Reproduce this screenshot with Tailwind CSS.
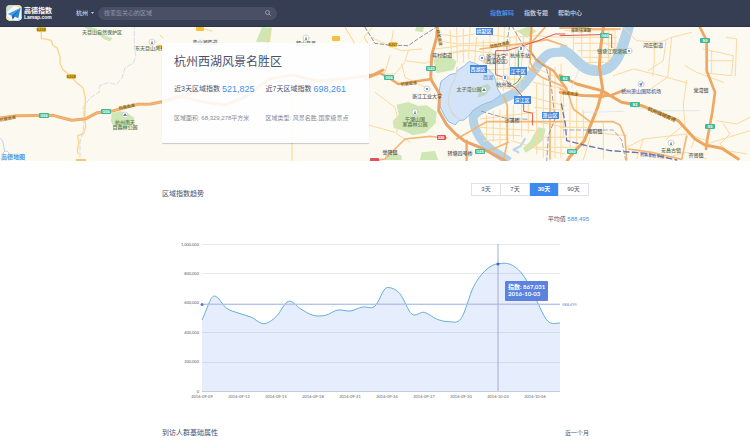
<!DOCTYPE html>
<html lang="zh-CN">
<head>
<meta charset="utf-8">
<meta name="viewport" content="width=device-width, initial-scale=1">
<title>高德指数</title>
<script src="https://cdn.jsdelivr.net/npm/@tailwindcss/browser@4"></script>
</head>
<body class="min-h-screen bg-white font-['Liberation_Sans','Noto_Sans_CJK_SC',sans-serif] text-[6px] leading-[8px] text-[#4a5068]">

<header class="flex h-[27px] items-center border-b border-[#2b3348] bg-[#363e54] pl-[6px] pr-[168px] text-[#d3d6de]">
  <a href="#" class="flex items-center gap-[2px] text-white" aria-label="高德指数">
    <svg class="h-[16px] w-[16px]" viewBox="0 0 48 48">
      <defs><clipPath id="lc"><rect x="1" y="1" width="46" height="46" rx="10"/></clipPath></defs>
      <g clip-path="url(#lc)">
        <rect width="48" height="48" fill="#f6f8f6"/>
        <path d="M0 0h26L0 24z" fill="#c9e3cf"/><path d="M22 0h26v12z" fill="#f5e3a0"/><path d="M0 30l20 18H0z" fill="#f3e7b4"/><path d="M26 48l22-12v12z" fill="#cfe6f7"/>
        <path d="M44 8L5 27l12 5z" fill="#3aa0ee"/><path d="M44 8L17 32l3 12 6-9z" fill="#1565b8"/><path d="M44 8L23 34l14 6z" fill="#2689e0"/>
      </g>
    </svg>
    <span class="flex flex-col font-bold">
      <span class="text-[7px] leading-[8px]">高德指数</span>
      <span class="text-[5px] leading-[5px]">Lamap.com</span>
    </span>
  </a>
  <button type="button" class="ml-[24px] flex items-center gap-[3px] font-medium">杭州
    <svg class="h-[2px] w-[3px]" viewBox="0 0 6 4"><path d="M0 0h6L3 4z" fill="#c5c9d4"/></svg>
  </button>
  <form class="ml-[4px] flex h-[13px] w-[179px] items-center rounded-full bg-[#4a4f66] px-[6px]">
    <label for="q" class="sr-only">搜索</label>
    <input id="q" type="text" placeholder="搜索您关心的区域" class="h-full min-w-0 flex-1 bg-transparent text-[6px] leading-[13px] outline-none placeholder:text-[#9498a8]">
    <button type="submit" aria-label="搜索"><svg class="h-[6px] w-[6px]" viewBox="0 0 12 12" fill="none" stroke="#a4a8b6" stroke-width="1.6"><circle cx="5" cy="5" r="4"/><path d="M8 8l3.5 3.5"/></svg></button>
  </form>
  <nav class="ml-auto flex gap-[10px] font-medium">
    <a href="#" class="text-[#4a9bf0]">指数解码</a>
    <a href="#">指数专题</a>
    <a href="#">帮助中心</a>
  </nav>
</header>

<section class="relative overflow-hidden bg-[#fcf9f0] pb-[18px] pt-[16px]">
  <svg class="absolute inset-0 h-full w-full" viewBox="0 27 750 134" preserveAspectRatio="xMidYMid slice" fill="none" stroke-linecap="round" stroke-linejoin="round" role="img" aria-label="杭州地图">
    <!-- west -->
    <g transform="translate(0 24) scale(.3333)">
      <path d="M245 0l45 14 20 20 28 8-8 10-18-6-16-14-40-20zM335 268l26-7 22 8 20 12-4 22-26 14-32-8-8-18z" fill="#cfe7b4"/>
      <path d="M403 0v75l5 22-8 20-25 15-8 28-18 22-24-6-25 8-2 20-28 18-20 28v70l-10 35 0 45" stroke="#d3d6e4" stroke-width="2.5" stroke-dasharray="14 7"/>
      <path d="M124 5v38l30 6 4 14 14 10 8 25v20l8 18 24 20 20 22 17 13 7 30-2 60 3 28-6 20-18 6 4 22-5 20 2 12" stroke="#f8d58a" stroke-width="4"/>
      <path d="M0 282l50-7 110-1 28 8 28 7 42-5 34-18 50-6 70-19 40-1 60-12 90-30" stroke="#eda55f" stroke-width="9"/>
      <path d="M0 282l50-7 110-1 28 8 28 7 42-5 34-18 50-6 70-19 40-1 60-12 90-30" stroke="#f3b678" stroke-width="4"/>
      <path d="M0 343l8 8 8 40" stroke="#b9d4ea" stroke-width="3"/>
      <path d="M230 408h26" stroke="#f0b740" stroke-width="5"/>
    </g>
    <!-- middle -->
    <path d="M262 27l10 1-2 14h-14z" fill="#cfe7b4"/>
    <path d="M163 101l16-5 24 6 22 3 20-8 24-18 24-4 24 6 26-2 30-4 10-5" stroke="#eda55f" stroke-width="3"/>
    <path d="M270 27l-3 20 10 30 15 20v65M196 27l16 4M160 35l3 3M345 27l10 17 12 9M372 28l-8 9 5 8" stroke="#f8d58a" stroke-width="1"/>
    <!-- lake and city -->
    <g transform="translate(365 24) scale(.3333)">
      <path d="M95 242l35-8 30 12 25-2 30 20-3 34-30 28-38 8-28-14-30-8-3-20 18-20zM205 105l45-12 25 20-10 25-50 10zM60 395l25-12 25 12v13H60zM170 385l40-4 10 27h-55zM520 310l22 4-8 35-32 25-20 12-8-14 20-18zM455 20l35-12 25 14-30 20zM155 6l22 3-3 16-24-4z" fill="#cfe7b4"/>
      <path d="M480 345l-14 22-20 10 14 8" stroke="#bcd8ea" stroke-width="7"/>
      <path d="M330 262C315 290 335 335 365 365S415 395 430 412" stroke="#b5d3e8" stroke-width="27" stroke-linecap="butt"/>
      <path d="M330 272C365 235 415 232 450 205S500 150 525 115 565 85 600 84" stroke="#b5d3e8" stroke-width="28" stroke-linecap="butt"/>
      <g stroke="#fbd9a0" stroke-width="3">
        <path d="M20 40l60 30 30 10 60-5M130 80l-10 30 60 8 70-30 80-10M75 95l-15 50-45 15M85 20l-8 50M30 205l60 45 10 40-5 40 40 25M40 150l50 0 30-35M110 120l10 40 60 30M0 300l90 25M220 30l55 8 70-10 90 12 70-5 95 5M215 50l65 10 100-5 120 15M210 75l80-10 100 0 60 5M240 90l60-12 120 14M255 20l5 80M275 12l2 100M295 15l0 100M315 10l-4 92M335 40l-6 75M355 48l0 70M375 25l0 100M400 10l-4 200M418 10l-3 190M435 40l-3 150M455 20l-8 180M478 20l-14 170M500 30l-8 100M330 140l150-8M380 165l100 0M390 190l80 5"/>
        <path d="M345 285l165-20M340 310l170 10M345 330l120 5M355 350l75-4M365 275v75M385 262v90M405 258v104M425 260v90M445 245v100M470 230v110M490 240v85M440 350l80 25 80 15M510 130l85 40M505 175l95 20M500 220l100 25M510 250l90 10M500 290l100 20M515 180v210M535 160v240M570 130v270M588 120v280M520 340h80M510 370h90"/>
      </g>
      <path d="M15 412l45-7 60-60 75-8 50 5M275 345l90-52h235M415 215l12 30v110l-10 45M345 75l155-20 45-8 60 20M490 130l40 30 70 30M555 135v270M345 385l40-10 45-20M540 10l-40 45-5 60 15 25" stroke="#f4b675" stroke-width="5"/>
      <path d="M222 205L228 172 255 152 272 148 282 136 300 124 312 112 330 118 350 128 372 138 385 150 392 170 398 195 408 212 385 230 352 242 325 258 315 272 297 288 282 290 270 303 250 292 240 278 226 250z" fill="#d3e3f8" stroke="#94bde9" stroke-width="3"/>
      <path d="M348 187l20-8 10 12-16 22-24 8 4-18z" fill="#bcd8c4"/>
      <path d="M276 130c2 40-26 50-26 100 2 32 16 48 38 58" stroke="#d5d9d3" stroke-width="4"/>
      <path d="M218 0L215 40 200 95 197 165 224 210 221 260 245 302 272 330 300 352 350 372 420 410" stroke="#e8a56a" stroke-width="9"/>
      <path d="M0 165l45-18 35 20 20 13 100-15M305 350v60M500 0l-5 80 20 30 50 30 40 55" stroke="#efa863" stroke-width="7"/>
      <path d="M0 10l30 48 40 5 60 2 28-20 60-38" stroke="#777c94" stroke-width="2.5" stroke-dasharray="11 7"/>
      <path d="M434 5l-8 50 0 40M440 5l35 60 70 70 15 60 10 90-20 50-5 80M350 262l70 20 70 4" stroke="#868aa2" stroke-width="2.5" stroke-dasharray="13 8"/>
      <path d="M600 30h-30l-50 20-55 18-40 12h-33v72l24 8 18 22 17 10 25 30v40l27 6v35" stroke="#d75a52" stroke-width="3"/>
      <path d="M460 78v70l8 10-10 16-15 10" stroke="#4da760" stroke-width="3"/>
    </g>
    <!-- east -->
    <g transform="translate(560 24) scale(.3333)">
      <path d="M0 78C40 82 50 135 105 140S180 105 208 0" stroke="#b5d3e8" stroke-width="32" stroke-linecap="butt"/>
      <g stroke="#fbd9a0" stroke-width="3">
        <path d="M15 20h150M20 40h150M40 58h130M55 80h110M70 100h90M80 115h60M40 20v60M65 15v85M90 15v110M145 20v95M165 20v65M140 60l30 15"/>
        <path d="M190 10l40 40 70 5 35-15 60-15M283 50l0 65-5 40M318 50l-8 60-45 30M160 155l60-20 90 22 70 20M335 40l-12 120-60 40M375 125l35 20 80 30M430 75l90 20-5 60-80-8M440 110h80M455 80v65M500 40l30 5-4 110M380 170l-10 70 5 60-55 45M470 290l60 10 40-20M490 300l20 30-30 30 20 20 60 10M440 360l130-40M380 330l60 20M200 370l50-25 130-15M250 345l-20 60M0 290l90 4M10 210v130M30 220v170M50 200v170M70 260v110M0 310h80M0 340h75M0 370h50M90 325l110 10M90 340l-20 68M130 295v110M300 405l80-20 60 20M395 370l10-30"/>
      </g>
      <path d="M20 195l20 60 50 38 70 0 20 10 15 35 5 70M0 195l60 20 70 5M205 375l70 10 90 21 15-70" stroke="#f4b675" stroke-width="5"/>
      <path d="M130 10l-8 60-4 60 10 65-15 55-40 100-45 50-8 14M0 155l50 25 75 20 60 35 60 10 60 25 50 20 50 55 30 18 50 10 50 32" stroke="#eda55f" stroke-width="9"/>
      <path d="M0 205l70 10 80 0 45-18M415 0l25 50 0 90 25 65-8 60-15 80-4 30" stroke="#efa863" stroke-width="8"/>
      <path d="M0 12h85M20 5l80 10h80" stroke="#efa863" stroke-width="5"/>
      <path d="M0 35l155-4v40" stroke="#d75a52" stroke-width="3"/>
      <path d="M4 240l12 60 4 50 60 15 70 15 110 8 90 20" stroke="#6874a8" stroke-width="4" stroke-dasharray="16 10"/>
      <path d="M10 318h150l25 30 12 60" stroke="#a2a6b6" stroke-width="3" stroke-dasharray="12 8"/>
      <path d="M70 265l120-3M220 250l70 10h130M60 130l-25 60" stroke="#cfe2ee" stroke-width="2"/>
    </g>
    <!-- road shields -->
    <g fill="#f4c13c"><rect x="37" y="27" width="9" height="5" rx="1"/><rect x="67" y="74" width="9" height="5" rx="1"/><rect x="196" y="27" width="8" height="4" rx="1"/><rect x="389" y="42" width="8" height="5" rx="1"/><rect x="332" y="36" width="8" height="5" rx="1"/><rect x="157" y="45" width="6" height="4" rx="1"/></g>
    <g fill="#3fb994"><rect x="39" y="113" width="10" height="5" rx="1"/><rect x="101" y="109" width="10" height="5" rx="1"/><rect x="384" y="75" width="10" height="5" rx="1"/><rect x="426" y="66" width="10" height="5" rx="1"/><rect x="475" y="149" width="10" height="5" rx="1"/><rect x="560" y="76" width="10" height="5" rx="1"/><rect x="600" y="33" width="9" height="5" rx="1"/><rect x="630" y="102" width="10" height="5" rx="1"/><rect x="700" y="38" width="10" height="5" rx="1"/><rect x="705" y="124" width="10" height="5" rx="1"/><rect x="567" y="149" width="10" height="5" rx="1"/></g>
    <g fill="#e0525a"><rect x="437" y="135" width="9" height="5" rx="1"/><rect x="370" y="158" width="9" height="4" rx="1"/></g>
    <g font-size="4" font-weight="700" text-anchor="middle"><g fill="#7a5b12"><text x="41" y="31">S208</text><text x="71" y="78">S208</text><text x="393" y="46">S207</text></g>
      <g fill="#fff"><text x="44" y="117">G56</text><text x="106" y="113">G56</text><text x="389" y="79">G56</text><text x="431" y="70">G25</text><text x="480" y="153">G25</text><text x="565" y="80">S2</text><text x="605" y="37">G60</text><text x="635" y="106">S2</text><text x="705" y="42">S9</text><text x="710" y="128">S9</text><text x="572" y="153">G60</text><text x="441" y="139">320</text></g>
      <g fill="#8a6a1c"><text transform="translate(8 120) rotate(-10)">杭徽高速</text><text transform="translate(127 108) rotate(-10)">杭徽高速</text><text transform="translate(409 85) rotate(-6)">杭徽高速</text><text transform="translate(500 46) rotate(-12)">德胜快速路</text><text transform="translate(570 95) rotate(6)">杭甬高速</text><text transform="translate(661 116) rotate(24)" font-size="5">杭州绕城高速</text><text x="581" y="32">艮新快速路</text><text transform="translate(438 38) rotate(80)">绕城高速</text></g>
      <text transform="translate(652 157) rotate(5)" fill="#6874a8">杭甬客运专线</text></g>
    <!-- points of interest -->
    <g fill="#fff" stroke="#b4bcc6" stroke-width=".6"><circle cx="152" cy="42" r="3"/><circle cx="125" cy="115" r="3"/><circle cx="415" cy="112" r="3"/><circle cx="427" cy="89" r="3"/><circle cx="482" cy="58" r="3"/><circle cx="521" cy="49" r="3"/><circle cx="505" cy="78" r="3"/><circle cx="484" cy="90" r="3"/><circle cx="641" cy="84" r="3"/><circle cx="629" cy="51" r="3"/><circle cx="671" cy="143" r="3"/><circle cx="306" cy="38" r="3"/><circle cx="6" cy="154" r="3"/></g>
    <g fill="#688b6e"><path d="M152 40l1 4h-2zM125 113l2 3h-4zM415 110l1 4h-2zM484 88l2 3h-4zM671 141l1 4h-2zM306 36l1 4h-2z"/></g>
    <g fill="#6f8fd0"><path d="M426 88h2v2h-2zM481 57h2v2h-2zM520 47h2v3h-2zM504 76h2v3h-2zM628 50h2v2h-2z"/><path d="M643 82l-4 2 1 1 1 2z"/></g>
    <g font-size="5" font-weight="500" text-anchor="middle" fill="#59605e">
      <g fill="#5f7a58"><text x="102" y="34">天目山自然保护区</text><text x="150" y="50">东天目山风景</text><text x="125" y="124">杭州南天</text><text x="125" y="129">目森林公园</text><text x="415" y="121">午潮山国</text><text x="415" y="126">家森林公园</text><text x="469" y="91">太子湾公园</text><text x="671" y="152">安昌古镇</text><text x="612" y="53">钱塘江观潮城</text></g>
      <text x="306" y="45">超山风景</text><text x="205" y="44">青山湖街道</text>
      <text x="442" y="57">蒋村街道</text><text x="496" y="58">浙江大学</text><text x="496" y="63">(西溪校区)</text><text x="520" y="57">杭州东站</text><text x="504" y="86">杭州站</text><text x="427" y="98">浙江工业大学</text><text x="512" y="122">沙浦桥</text><text x="390" y="154">受降镇</text><text x="460" y="155">转塘四号桥</text><text x="488" y="79" fill="#6f9bd3">西湖</text>
      <text x="653" y="47">河庄街道</text><text x="641" y="93" fill="#566ea5">杭州萧山国际机场</text><text x="701" y="92">党湾镇</text><text x="595" y="133">衙前镇</text><text x="696" y="157">齐贤镇</text>
    </g>
    <g fill="#4386dc"><rect x="476" y="28" width="17" height="7"/><rect x="470" y="65" width="17" height="8"/><rect x="510" y="67" width="17" height="8"/><rect x="514" y="96" width="17" height="8"/><rect x="542" y="112" width="17" height="7"/></g>
    <g fill="#fff" font-size="5" font-weight="500" text-anchor="middle"><text x="484" y="33">拱墅区</text><text x="478" y="71">西湖区</text><text x="518" y="73">江干区</text><text x="522" y="102">滨江区</text><text x="550" y="117">萧山区</text></g>
    <text x="1" y="159" font-size="6" font-weight="700" fill="#4b98e6">高德地图</text>
  </svg>

  <div class="relative mx-auto max-w-[426px]">
    <article class="w-[207px] rounded-[1px] bg-white/90 px-[12px] pb-[20px] pt-[9px] shadow-[0_1px_1px_rgba(0,0,0,0.2)]">
      <h1 class="text-[12px] leading-[20px]">杭州西湖风景名胜区</h1>
      <dl class="mt-[10px] grid grid-cols-2 leading-[14px]">
        <div class="flex items-center gap-[2px] whitespace-nowrap"><dt class="text-[7px]">近3天区域指数</dt><dd class="text-[9px] text-[#3f90e8]">521,825</dd></div>
        <div class="flex items-center gap-[2px] whitespace-nowrap"><dt class="text-[7px]">近7天区域指数</dt><dd class="text-[9px] text-[#3f90e8]">698,261</dd></div>
      </dl>
      <div class="mt-[17px] grid grid-cols-2 whitespace-nowrap leading-[10px] text-[#858a99]">
        <p>区域面积: 68,329,278平方米</p>
        <p>区域类型: 风景名胜,国家级景点</p>
      </div>
    </article>
  </div>
</section>

<main class="mx-auto max-w-[428px] pl-[1px] pt-[22px]">
  <section>
    <div class="flex items-start justify-between">
      <h2 class="pt-[6px] text-[7px] leading-[10px]">区域指数趋势</h2>
      <div class="grid w-[118px] grid-cols-4 divide-x divide-[#dfe2e8] border border-[#dfe2e8] text-center leading-[11px]">
        <button type="button">3天</button>
        <button type="button">7天</button>
        <button type="button" class="-my-px bg-[#3d8bef] font-bold leading-[13px] text-white">30天</button>
        <button type="button">90天</button>
      </div>
    </div>
    <p class="mt-[16px] text-right">平均值 <span class="text-[#3f90e8]">588,495</span></p>
    <svg class="mt-[13px] block w-full" viewBox="162 236 427 168" font-family="Lato, 'Noto Sans CJK SC', sans-serif" role="img" aria-label="区域指数趋势图">
      <g stroke="#e6e8ec" stroke-width="1"><path d="M202 244.5h358M202 273.5h358M202 303.5h358M202 332.5h358M202 362.5h358"/><path d="M202 391.5h358" stroke="#c8ced9"/></g>
      <g font-size="4" fill="#5a5d66" text-anchor="end"><text x="199" y="246">1,000,000</text><text x="199" y="275">800,000</text><text x="199" y="304">600,000</text><text x="199" y="334">400,000</text><text x="199" y="363">200,000</text><text x="199" y="393">0</text></g>
      <path id="area" fill="#6291ee" fill-opacity=".16"/>
      <path id="line" fill="none" stroke="#62b0d8" stroke-width="1"/>
      <path d="M202 304.5h358" stroke="#b5c4ee" stroke-width="1"/>
      <circle cx="202" cy="304.5" r="1.5" fill="#5278d4"/>
      <text x="562" y="306" font-size="4" fill="#6c86da">588,495</text>
      <path d="M498 244v147" stroke="#9fb0d0" stroke-width="1"/>
      <circle cx="498" cy="264" r="1.5" fill="#4466c4"/>
      <g id="xlabels" font-size="4" fill="#5a5d66" text-anchor="middle"></g>
      <rect x="505" y="281" width="43" height="20" rx="1" fill="#5b82de"/>
      <g font-size="6" font-weight="700" fill="#fff"><text x="508" y="289">指数: 867,031</text><text x="508" y="296">2016-10-03</text></g>
    </svg>
  </section>
  <section class="mt-[24px] flex items-center justify-between pb-[8px]">
    <h2 class="text-[7px] leading-[10px]">到访人群基础属性</h2>
    <p>近一个月</p>
  </section>
</main>

<script>
const ys=[320,296,308.3,313.3,317.3,323.7,316.7,301.3,309,315.3,315.3,310,311,307,306.3,287.5,293.3,314,312.3,319,321.7,318.3,286.7,270,263.7,264.5,275,298,321,323];
const step=358/29,last=ys.length-1;
// Smooth slopes at each day, flat at the final one
const m=ys.map((_,i)=>i===last?0:i===0?(ys[1]-ys[0])/step:(ys[i+1]-ys[i-1])/(2*step));
m[1]=0;m[15]=0;m[24]=-.1;
let p='M202 '+ys[0];
for(let i=0;i<last;i++){const x=202+i*step,h=step/3;p+=`C${x+h} ${ys[i]+m[i]*h} ${x+2*h} ${ys[i+1]-m[i+1]*h} ${x+step} ${ys[i+1]}`}
document.getElementById('line').setAttribute('d',p);
document.getElementById('area').setAttribute('d',p+'V391H202Z');
['09-09','09-12','09-15','09-18','09-21','09-24','09-27','09-30','10-03','10-06'].forEach((t,i)=>{
  const e=document.createElementNS('http://www.w3.org/2000/svg','text');
  e.setAttribute('x',202+i*37);e.setAttribute('y',398);e.textContent='2016-'+t;
  document.getElementById('xlabels').append(e);
});
</script>
</body>
</html>
